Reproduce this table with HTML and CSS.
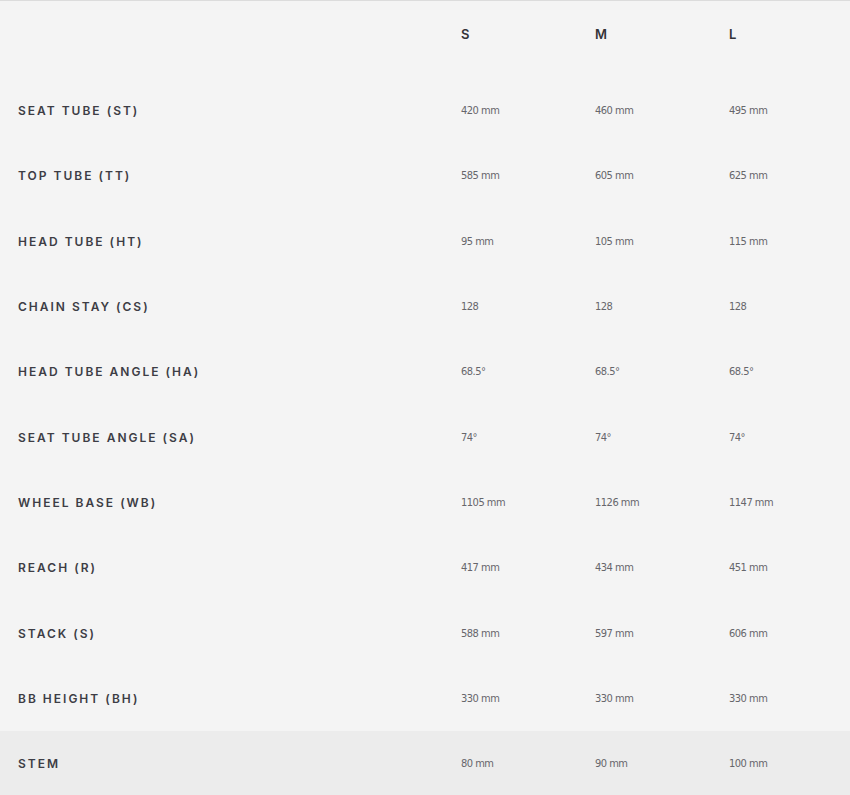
FILE: index.html
```html
<!DOCTYPE html>
<html>
<head>
<meta charset="utf-8">
<link rel="stylesheet" href="styles.css">
</head>
<body>
<div class="geo">
  <div class="row head">
    <div class="cell label"></div>
    <div class="cell size">S</div>
    <div class="cell size">M</div>
    <div class="cell size">L</div>
  </div>
  <div class="row"><div class="cell label">SEAT TUBE (ST)</div><div class="cell val">420 mm</div><div class="cell val">460 mm</div><div class="cell val">495 mm</div></div>
  <div class="row"><div class="cell label">TOP TUBE (TT)</div><div class="cell val">585 mm</div><div class="cell val">605 mm</div><div class="cell val">625 mm</div></div>
  <div class="row"><div class="cell label">HEAD TUBE (HT)</div><div class="cell val">95 mm</div><div class="cell val">105 mm</div><div class="cell val">115 mm</div></div>
  <div class="row"><div class="cell label">CHAIN STAY (CS)</div><div class="cell val">128</div><div class="cell val">128</div><div class="cell val">128</div></div>
  <div class="row"><div class="cell label">HEAD TUBE ANGLE (HA)</div><div class="cell val">68.5°</div><div class="cell val">68.5°</div><div class="cell val">68.5°</div></div>
  <div class="row"><div class="cell label">SEAT TUBE ANGLE (SA)</div><div class="cell val">74°</div><div class="cell val">74°</div><div class="cell val">74°</div></div>
  <div class="row"><div class="cell label">WHEEL BASE (WB)</div><div class="cell val">1105 mm</div><div class="cell val">1126 mm</div><div class="cell val">1147 mm</div></div>
  <div class="row"><div class="cell label">REACH (R)</div><div class="cell val">417 mm</div><div class="cell val">434 mm</div><div class="cell val">451 mm</div></div>
  <div class="row"><div class="cell label">STACK (S)</div><div class="cell val">588 mm</div><div class="cell val">597 mm</div><div class="cell val">606 mm</div></div>
  <div class="row"><div class="cell label">BB HEIGHT (BH)</div><div class="cell val">330 mm</div><div class="cell val">330 mm</div><div class="cell val">330 mm</div></div>
  <div class="row alt"><div class="cell label">STEM</div><div class="cell val">80 mm</div><div class="cell val">90 mm</div><div class="cell val">100 mm</div></div>
</div>
</body>
</html>
```
FILE: styles.css
```css
html, body {
  margin: 0;
  padding: 0;
  background: #f4f4f4;
}
.geo {
  border-top: 1px solid #dcdcdc;
  background: #f4f4f4;
  font-family: Inter, "Open Sans", "Liberation Sans", sans-serif;
}
.row {
  display: grid;
  grid-template-columns: 443px 134px 134px 1fr;
  height: 65.3px;
  align-items: center;
}
.row.head {
  height: 77px;
  align-items: start;
}
.row.alt {
  background: #ececec;
}
.cell {
  padding-left: 18px;
}
.label {
  font-size: 12px;
  font-weight: 600;
  letter-spacing: 2px;
  color: #3d3d45;
}
.size {
  padding-top: 25px;
  font-size: 13px;
  font-weight: 600;
  color: #333338;
}
.val {
  font-family: "DejaVu Sans Condensed", "DejaVu Sans", sans-serif;
  font-stretch: condensed;
  font-size: 11px;
  letter-spacing: -0.5px;
  color: #66666b;
}
```
